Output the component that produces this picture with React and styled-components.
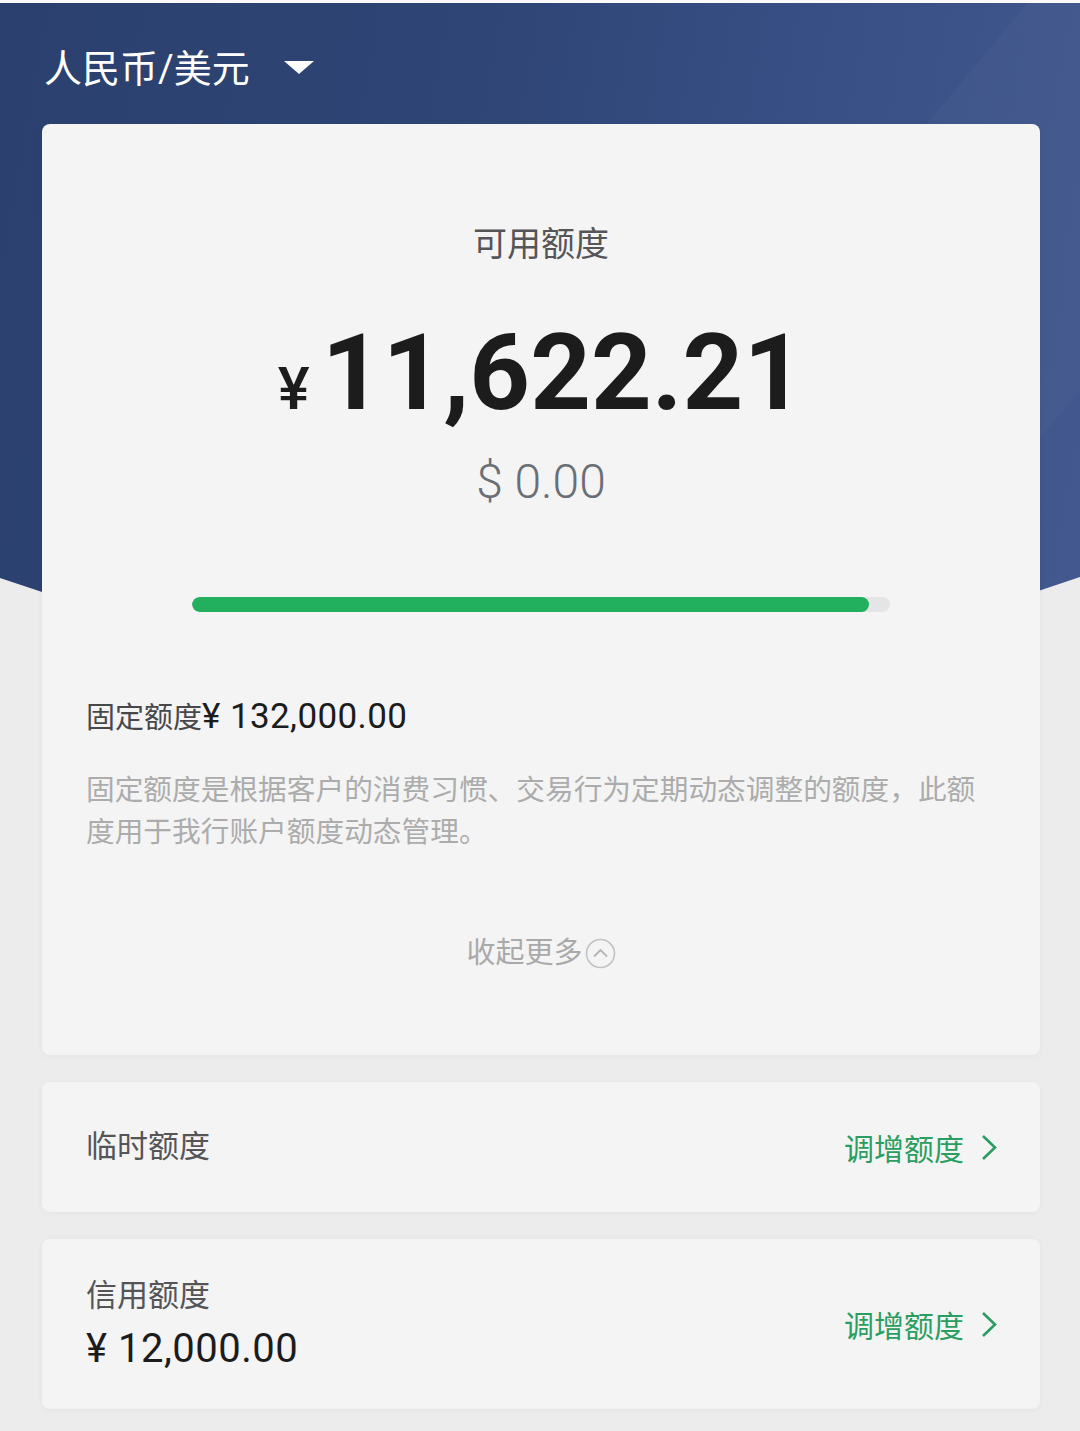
import styled, { createGlobalStyle } from "styled-components"

const GlobalStyle = createGlobalStyle`
    body {
        margin: 0;
        background: #ececec;
        font-family: Roboto, "Noto Sans CJK SC", sans-serif;
    }
`

const colors = {
    navy: "#2c4271",
    card: "#f4f4f4",
    text: "#1c1c1c",
    label: "#555558",
    muted: "#acacac",
    green: "#2a9e60",
    bar: "#22b05f",
}

const DropdownArrow = () => (
    <svg width="30" height="13" viewBox="0 0 30 13">
        <polygon points="0,0 30,0 15,13" fill="#fff" />
    </svg>
)

const CircleUp = () => (
    <svg width="31" height="31" viewBox="0 0 31 31">
        <circle cx="15.5" cy="15.5" r="14" fill="none" stroke="#c2c2c2" strokeWidth="1.6" />
        <polyline points="9,18.5 15.5,12 22,18.5" fill="none" stroke="#b4b4b4" strokeWidth="1.8" />
    </svg>
)

const Chevron = () => (
    <svg width="16" height="27" viewBox="0 0 16 27">
        <polyline points="2,2 14,13.5 2,25" fill="none" stroke={colors.green} strokeWidth="2.6" />
    </svg>
)

const ActionLink = () => (
    <Action>
        调增额度
        <Chevron />
    </Action>
)

export default function App() {
    return (
        <Page>
            <GlobalStyle />
            <Backdrop />

            <Header>
                <CurrencyPicker>
                    人民币/美元
                    <DropdownArrow />
                </CurrencyPicker>
            </Header>

            <Content>
                <MainCard>
                    <Caption>可用额度</Caption>

                    <Amount>
                        <Yen>¥</Yen>
                        <Big>11,622.21</Big>
                    </Amount>
                    <Dollar>$ 0.00</Dollar>

                    <Track>
                        <Fill style={{ width: `${(677 / 698) * 100}%` }} />
                    </Track>

                    <FixedLine>
                        <FixedLabel>固定额度</FixedLabel>
                        <FixedValue>¥ 132,000.00</FixedValue>
                    </FixedLine>

                    <Note>
                        固定额度是根据客户的消费习惯、交易行为定期动态调整的额度，此额度用于我行账户额度动态管理。
                    </Note>

                    <Collapse>
                        收起更多
                        <CircleUp />
                    </Collapse>
                </MainCard>

                <RowCard $tall={false}>
                    <RowLabel>临时额度</RowLabel>
                    <ActionLink />
                </RowCard>

                <RowCard $tall>
                    <div>
                        <RowLabel>信用额度</RowLabel>
                        <RowValue>¥ 12,000.00</RowValue>
                    </div>
                    <ActionLink />
                </RowCard>
            </Content>
        </Page>
    )
}

const Page = styled.div`
    position: relative;
    min-height: 1431px;
    border-top: 3px solid #fafafa;
    box-sizing: border-box;
    overflow: hidden;
`

const Backdrop = styled.div`
    position: absolute;
    top: 0;
    left: 0;
    right: 0;
    height: 755px;
    background:
        linear-gradient(130deg, rgba(255, 255, 255, 0) 60%, rgba(255, 255, 255, 0.025) 60%, rgba(255, 255, 255, 0.02) 82%, rgba(255, 255, 255, 0) 82%),
        linear-gradient(100deg, #2b406e 0%, #2e4575 40%, #385086 70%, #44598f 100%);
    clip-path: polygon(0 0, 100% 0, 100% 574px, 50% 100%, 0 575px);
`

const Header = styled.header`
    position: relative;
    height: 121px;
    padding: 10px 44px 0;
    box-sizing: border-box;
    display: flex;
    align-items: center;
`

const CurrencyPicker = styled.div`
    display: flex;
    align-items: center;
    gap: 34px;
    color: #fff;
    font-size: 38px;
    line-height: 1;

    svg {
        margin-top: -2px;
    }
`

const Content = styled.main`
    position: relative;
    display: flex;
    flex-direction: column;
    gap: 27px;
    padding: 0 40px 20px 42px;
`

const Card = styled.section`
    background: ${colors.card};
    border-radius: 8px;
    box-shadow: 0 1px 6px rgba(0, 0, 0, 0.04);
`

const MainCard = styled(Card)`
    display: flex;
    flex-direction: column;
    align-items: center;
    padding: 100px 44px 82px;
`

const Caption = styled.div`
    font-size: 34px;
    line-height: 41px;
    color: ${colors.label};
`

const Amount = styled.div`
    display: flex;
    align-items: baseline;
    margin-top: 55px;
    color: ${colors.text};
    line-height: 1;
`

const Yen = styled.span`
    font-size: 60px;
    font-weight: 500;
    margin-right: 12px;
`

const Big = styled.span`
    font-size: 106px;
    font-weight: 700;
`

const Dollar = styled.div`
    margin-top: 32px;
    font-size: 48px;
    line-height: 1;
    font-weight: 300;
    color: #6a6e75;
`

const Track = styled.div`
    width: 698px;
    height: 15px;
    margin-top: 91px;
    border-radius: 8px;
    background: #e5e5e5;
    overflow: hidden;
`

const Fill = styled.div`
    height: 100%;
    border-radius: 8px;
    background: ${colors.bar};
`

const FixedLine = styled.div`
    align-self: stretch;
    display: flex;
    align-items: baseline;
    margin-top: 85px;
    line-height: 40px;
`

const FixedLabel = styled.span`
    font-size: 29px;
    color: #48484a;
`

const FixedValue = styled.span`
    font-size: 35px;
    letter-spacing: 0.4px;
    color: ${colors.text};
`

const Note = styled.p`
    align-self: stretch;
    margin: 31px 0 0;
    font-size: 28.7px;
    line-height: 42px;
    color: ${colors.muted};
`

const Collapse = styled.div`
    display: flex;
    align-items: center;
    gap: 2px;
    margin-top: 80px;
    font-size: 29px;
    line-height: 40px;
    color: #a9a9a9;
`

const RowCard = styled(Card)`
    display: flex;
    align-items: center;
    justify-content: space-between;
    height: ${props => (props.$tall ? "170px" : "130px")};
    padding: 0 43px 0 44px;
    box-sizing: border-box;
`

const RowLabel = styled.div`
    font-size: 31px;
    line-height: 40px;
    color: ${colors.label};
`

const RowValue = styled.div`
    margin-top: 10px;
    font-size: 40px;
    letter-spacing: 0.5px;
    line-height: 46px;
    color: ${colors.text};
`

const Action = styled.div`
    display: flex;
    align-items: center;
    gap: 17px;
    font-size: 30px;
    color: ${colors.green};
`
